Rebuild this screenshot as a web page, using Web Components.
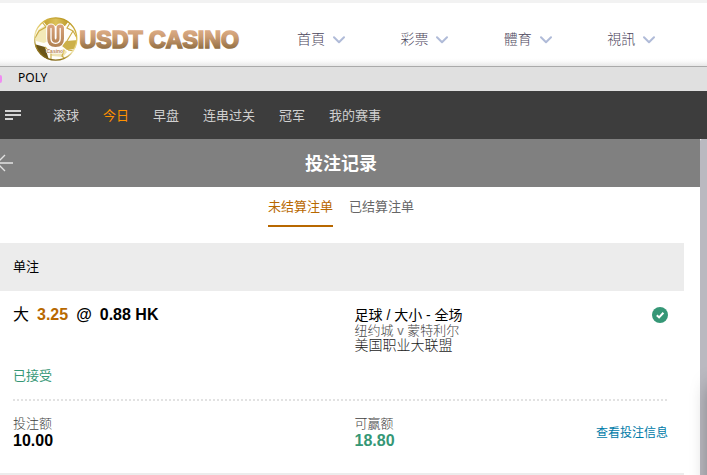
<!DOCTYPE html>
<html lang="zh">
<head>
<meta charset="utf-8">
<title>投注记录</title>
<style>
body{margin:0;width:707px;height:475px;overflow:hidden;background:#fff;font-family:"Liberation Sans","Noto Sans CJK SC",sans-serif;font-weight:400}
</style>
</head>
<body>
<betting-page></betting-page>
<script>
function define(name, html){
  const t=document.createElement('template');
  t.innerHTML=html;
  customElements.define(name,class extends HTMLElement{
    constructor(){super();this.attachShadow({mode:'open'}).append(t.content.cloneNode(true));}
  });
}

define('brand-logo',`
<style>:host{display:block;width:222px;height:50px}svg{display:block}</style>
<svg width="222" height="50" viewBox="30 14 222 50">
 <defs>
  <linearGradient id="g" gradientUnits="userSpaceOnUse" x1="0" y1="30" x2="0" y2="50"><stop offset="0" stop-color="#dcac86"/><stop offset="0.35" stop-color="#cb9c73"/><stop offset="1" stop-color="#8c6a3e"/></linearGradient>
  <linearGradient id="u" gradientUnits="userSpaceOnUse" x1="0" y1="25" x2="0" y2="48"><stop offset="0" stop-color="#d9a27a"/><stop offset="1" stop-color="#ae8050"/></linearGradient>
  <linearGradient id="b" x1="0.7" y1="0" x2="0.25" y2="1"><stop offset="0" stop-color="#b89520"/><stop offset="0.3" stop-color="#dcc052"/><stop offset="0.6" stop-color="#f1e6ae"/><stop offset="0.8" stop-color="#a88a28"/><stop offset="1" stop-color="#6d5510"/></linearGradient>
  <linearGradient id="d" x1="0" y1="0" x2="1" y2="0"><stop offset="0" stop-color="#c4a030"/><stop offset="0.5" stop-color="#dcc15a"/><stop offset="1" stop-color="#bd9a2c"/></linearGradient>
  <clipPath id="c"><circle cx="55.7" cy="39" r="21.5"/></clipPath>
 </defs>
 <circle cx="55.7" cy="39" r="21.5" fill="#fffefa"/>
 <g clip-path="url(#c)">
  <path d="M43 21L50 18H62L69 21L65 26H47Z" fill="url(#d)"/>
  <path d="M39 29L46 25L50 40L44 43L36 41L34 38Z" fill="#f3e9b8"/>
  <path d="M66 41L78 40L75 49L67 50L62 46Z" fill="#ccb04a"/>
  <path d="M34 44L45 47L49 60L42 58L34 50Z" fill="#6b5518"/>
  <path d="M50 53L64 49L67 52L63 57L52 56Z" fill="#efe3b4"/>
  <g fill="none" stroke="#cbad48" stroke-width="1.2"><path d="M42 22L46 27L39 31L35 38M70 23L67 28L73 31L77 38M73 31L67 41M45 47L51 53V61M64 50L62 56L66 60M68 50L74 51"/></g>
 </g>
 <circle cx="55.7" cy="39" r="21.1" fill="none" stroke="url(#b)" stroke-width="1.3"/>
 <path d="M51 28.3V38.5Q51 43.3 55.6 43.3Q60.2 43.3 60.2 38.5V28.3" fill="none" stroke="#fff" stroke-width="9.6" stroke-linecap="round"/>
 <path d="M51 28.3V38.5Q51 43.3 55.6 43.3Q60.2 43.3 60.2 38.5V28.3" fill="none" stroke="url(#u)" stroke-width="7.6" stroke-linecap="round"/>
 <path d="M51 28.3V38.5Q51 43.3 55.6 43.3Q60.2 43.3 60.2 38.5V28.3" fill="none" stroke="#fff" stroke-width="1.3" stroke-linecap="round"/>
 <path d="M55.6 27V38" stroke="#fff" stroke-width="1.4"/>
 <text x="46.5" y="53" font-family="Liberation Sans" font-weight="700" font-size="5" fill="#b98555" stroke="#fff" stroke-width="1.2" paint-order="stroke">Casino</text>
 <text x="79.5" y="48.3" font-family="Liberation Sans" font-weight="700" font-size="23.5" textLength="159.5" lengthAdjust="spacingAndGlyphs" fill="url(#g)" stroke="url(#g)" stroke-width="1.7">USDT CASINO</text>
</svg>`);

define('nav-item',`
<style>:host{display:flex;align-items:center;gap:8px;width:103.4px;height:24px;font:14px/24px "Noto Sans CJK TC",sans-serif;font-weight:300;color:#4c465c}svg{display:block;margin-top:3px}</style>
<span><slot></slot></span>
<svg width="12" height="8" viewBox="0 0 12 8"><path d="M1 1.2L6 6.2L11 1.2" fill="none" stroke="#b0bbd8" stroke-width="2" stroke-linecap="round" stroke-linejoin="round"/></svg>`);

define('site-header',`
<style>:host{display:flex;box-sizing:border-box;height:67px;border-top:3px solid #f2f2f2;border-bottom:1px solid #aaa;background:linear-gradient(#fff 55px,#fbfbfb 58px,#e8e8e8 63px)}
brand-logo{margin:11px 0 0 30px;flex:none}nav{display:flex;margin:23px 0 0 45px}nav>*{flex:none}nav>:last-child{width:60px}</style>
<brand-logo></brand-logo>
<nav><nav-item>首頁</nav-item><nav-item>彩票</nav-item><nav-item>體育</nav-item><nav-item>視訊</nav-item></nav>`);

define('provider-bar',`
<style>:host{display:flex;align-items:center;height:24px;background:#e0e0e0;font:12px/22px "Noto Sans",sans-serif;color:#000}
i{width:2px;height:8px;border-radius:0 4px 4px 0;background:#f08cf2;margin-right:16px}span{margin-top:-2px}</style><i></i><span><slot></slot></span>`);

define('sport-menu',`
<style>:host{display:flex;align-items:center;height:48px;background:#3d3d3d;color:#d0d0d0;font-size:13px;line-height:20px}
svg{margin:0 32px 0 5px}nav{display:flex;gap:24px;padding-top:2px}::slotted([active]){color:#ff9100}::slotted(span){white-space:nowrap}</style>
<svg width="16" height="12"><path d="M0 2H16M0 6H16M0 10H8" transform="translate(0 .0)" stroke="#d4d4d4" stroke-width="2"/></svg>
<nav><slot></slot></nav>`);

define('page-title',`
<style>:host{display:grid;grid-template-columns:14px 1fr 32px;align-items:center;height:48px;background:#808080;color:#fff}
h1{margin:0;text-align:center;font-size:18px;line-height:28px;font-weight:700;padding-top:1px}</style>
<svg width="14" height="18"><path d="M13 9H-2M5 1L-3 9L5 17" fill="none" stroke="#e2e2e2" stroke-width="1.3"/></svg>
<h1><slot></slot></h1>`);

define('bet-tabs',`
<style>:host{display:flex;justify-content:center;gap:16px;height:56px;box-sizing:border-box;padding:9px 18px 0 0;font-size:13px;line-height:22px;color:#666}
::slotted(span){height:29px}::slotted([active]){color:#b86800;border-bottom:2px solid #b86800}</style><slot></slot>`);

define('status-check',`
<style>:host{display:block;width:16px;height:16px}svg{display:block}</style>
<svg width="16" height="16"><circle cx="8" cy="8" r="8" fill="#359776"/><path d="M4.8 8.2L7.1 10.4L11.4 5.7" fill="none" stroke="#fff" stroke-width="2"/></svg>`);

define('bet-card',`
<style>
:host{display:block;width:684px;box-sizing:border-box;border-bottom:2px solid #ececec;height:232px}
header{height:48px;box-sizing:border-box;padding:13px;background:#ececec;font-size:13px;line-height:22px;color:#000}
.body{padding:0 16px 0 13px}
.top{display:grid;grid-template-columns:341.5px 1fr 16px;height:108px}
.sel{display:flex;gap:8px;margin-top:13px;font-size:16px;line-height:22px;font-weight:700;color:#000}
.sel em{font-style:normal;color:#b86800}.sel span:first-child{font-weight:400}
.ok{margin-top:40px;font-size:13px;line-height:20px;color:#359776}
.ev{margin-top:17px;line-height:15px;font-size:14px;color:#000}.ev .m{font-size:13px;color:#444;font-weight:300}.ev .l{color:#222;font-weight:300}
.v{color:#777}
status-check{margin-top:16px}
.rule{height:2px}svg{display:block}
.foot{display:grid;grid-template-columns:341.5px 1fr auto;margin-top:15px;font-size:13px;line-height:16px;color:#404040;font-weight:300}
b{display:block;font-size:16px;line-height:18px;font-weight:700;color:#000}.win b{color:#359776}
.link{font-size:12px;margin-top:9px;color:#007ba8;font-weight:400}
</style>
<header>单注</header>
<div class="body">
 <div class="top">
  <div><div class="sel"><span>大</span><em>3.25</em><span>@</span><span>0.88 HK</span></div><div class="ok">已接受</div></div>
  <div class="ev"><div>足球 / 大小 - 全场</div><div class="m">纽约城 <span class="v">v</span> 蒙特利尔</div><div class="l">美国职业大联盟</div></div>
  <status-check></status-check>
 </div>
 <div class="rule"><svg width="655" height="2"><path d="M0 1H655" stroke="#e2e2e2" stroke-width="2" stroke-dasharray="2 2"/></svg></div>
 <div class="foot"><div>投注额<b>10.00</b></div><div class="win">可赢额<b>18.80</b></div><div class="link">查看投注信息</div></div>
</div>`);

define('betting-page',`
<style>
:host{display:block;position:relative;width:707px;height:475px;overflow:hidden}
.main{display:grid;grid-template-columns:700px 7px;height:336px}
.side{background:#bab9c0;border-top-left-radius:2px}
.shade{position:absolute;left:711px;top:386px;width:60px;height:150px;box-shadow:0 0 20px rgba(0,0,0,.4)}
</style>
<site-header></site-header>
<provider-bar>POLY</provider-bar>
<sport-menu><span>滚球</span><span active>今日</span><span>早盘</span><span>连串过关</span><span>冠军</span><span>我的赛事</span></sport-menu>
<div class="main">
 <div><page-title>投注记录</page-title><bet-tabs><span active>未结算注单</span><span>已结算注单</span></bet-tabs><bet-card></bet-card></div>
 <div class="side"></div>
</div>
<div class="shade"></div>`);
</script>
</body>
</html>
